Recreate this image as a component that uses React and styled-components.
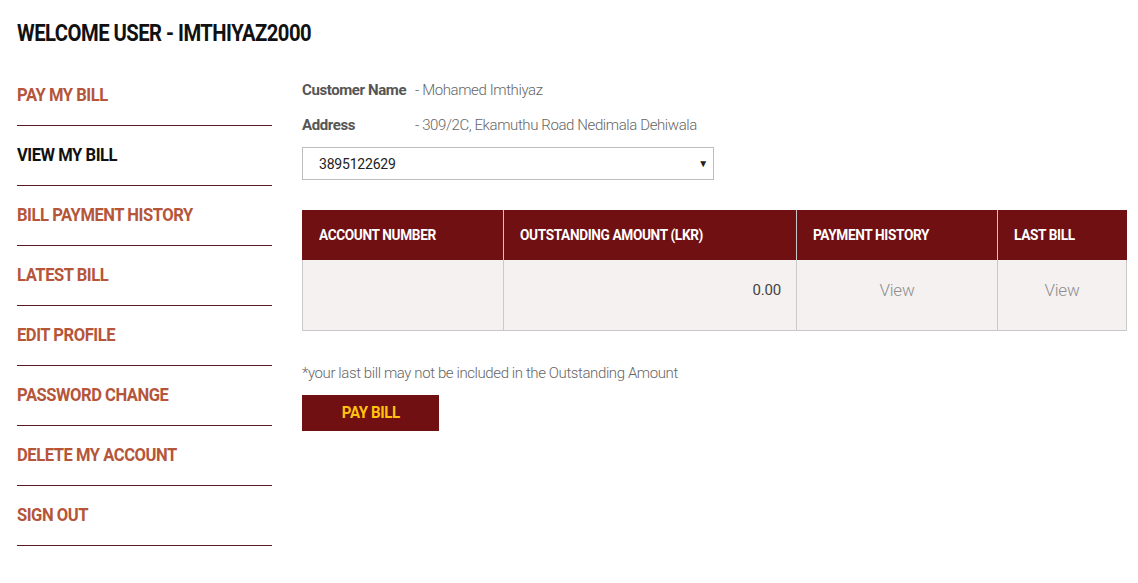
import React from 'react'
import styled, { createGlobalStyle } from 'styled-components'

const GlobalStyle = createGlobalStyle`
    body{
        margin:0;
        background:#fff;
        font-family:Roboto, "Liberation Sans", sans-serif;
    }
`;

const menu = [
    'pay my bill',
    'view my bill',
    'bill payment history',
    'latest bill',
    'edit profile',
    'password change',
    'delete my account',
    'sign out',
];

const App = () => {
    return (
        <Page>
            <GlobalStyle />
            <Title><Narrow scale={0.88}>welcome user - imthiyaz2000</Narrow></Title>
            <Body>
                <Side>
                    {menu.map((m) => (
                        <MenuItem key={m} $active={m === 'view my bill'}>
                            <Narrow scale={0.92}>{m}</Narrow>
                        </MenuItem>
                    ))}
                </Side>
                <Main>
                    <Info>
                        <Label>Customer Name</Label>
                        <Value>- Mohamed Imthiyaz</Value>
                    </Info>
                    <Info>
                        <Label>Address</Label>
                        <Value>- 309/2C, Ekamuthu Road Nedimala Dehiwala</Value>
                    </Info>
                    <Select>
                        <span>3895122629</span>
                        <Arrow>▼</Arrow>
                    </Select>
                    <Table>
                        <thead>
                            <tr>
                                <Th width={201}><Narrow scale={0.91}>account number</Narrow></Th>
                                <Th width={293}><Narrow scale={0.91}>outstanding amount (lkr)</Narrow></Th>
                                <Th width={201}><Narrow scale={0.91}>payment history</Narrow></Th>
                                <Th><Narrow scale={0.91}>last bill</Narrow></Th>
                            </tr>
                        </thead>
                        <tbody>
                            <tr>
                                <Td></Td>
                                <Td align="right">0.00</Td>
                                <Td align="center"><Link>View</Link></Td>
                                <Td align="center"><Link>View</Link></Td>
                            </tr>
                        </tbody>
                    </Table>
                    <Note>*your last bill may not be included in the Outstanding Amount</Note>
                    <PayButton><Narrow scale={0.94} origin="center">pay bill</Narrow></PayButton>
                </Main>
            </Body>
        </Page>
    )
}

// Roboto is wider than the condensed face in the picture, so squeeze the caps a bit
const Narrow = styled.span`
    display:inline-block;
    white-space:nowrap;
    transform:scaleX(${(p) => p.scale || 1});
    transform-origin:${(p) => p.origin || 'left'} center;
`;

const Page = styled.div`
    padding:22px 11px 0 17px;
    width:1110px;
`;

const Title = styled.h1`
    margin:0;
    height:32px;
    font-size:23px;
    line-height:1;
    font-weight:700;
    letter-spacing:-0.6px;
    text-transform:uppercase;
    color:#111;
`;

const Body = styled.div`
    display:flex;
    margin-top:12px;
`;

const Side = styled.div`
    width:255px;
    display:flex;
    flex-direction:column;
    flex-shrink:0;
`;

const MenuItem = styled.a`
    display:block;
    height:60px;
    padding-top:20px;
    box-sizing:border-box;
    line-height:1;
    border-bottom:1px solid #5a1c24;
    font-size:18px;
    font-weight:700;
    letter-spacing:-0.5px;
    text-transform:uppercase;
    color:${(p) => (p.$active ? '#111' : '#b5553a')};
    cursor:pointer;
`;

const Main = styled.div`
    flex:1;
    margin-left:30px;
    padding-top:6px;
`;

const Info = styled.div`
    display:flex;
    align-items:center;
    height:35px;
    font-size:15px;
`;

const Label = styled.div`
    width:113px;
    font-weight:700;
    letter-spacing:-0.4px;
    color:#555;
`;

const Value = styled.div`
    font-weight:300;
    letter-spacing:-0.4px;
    color:#666;
`;

const Select = styled.div`
    margin-top:5px;
    width:412px;
    height:33px;
    box-sizing:border-box;
    border:1px solid #bdbdbd;
    display:flex;
    align-items:center;
    justify-content:space-between;
    padding:0 5px 0 16px;
    font-size:14px;
    letter-spacing:-0.2px;
    color:#222;
`;

const Arrow = styled.span`
    font-size:10px;
    color:#222;
`;

const Table = styled.table`
    margin-top:30px;
    width:825px;
    border-collapse:collapse;
    table-layout:fixed;
`;

const Th = styled.th`
    box-sizing:border-box;
    width:${(p) => (p.width ? p.width + 'px' : 'auto')};
    height:50px;
    padding:0 0 0 16px;
    text-align:left;
    background:#701013;
    color:#fff;
    font-size:15px;
    font-weight:700;
    letter-spacing:-0.4px;
    text-transform:uppercase;
    border-left:1px solid #c9c9c9;
    &:first-child{
        border-left:1px solid #701013;
    }
`;

const Td = styled.td`
    box-sizing:border-box;
    height:70px;
    padding:0 15px 10px;
    text-align:${(p) => p.align || 'left'};
    background:#f5f1f0;
    border:1px solid #c9c9c9;
    border-top:none;
    font-size:15px;
    letter-spacing:-0.2px;
    color:#444;
`;

const Link = styled.a`
    font-size:17px;
    font-weight:300;
    color:#8e8e8e;
    cursor:pointer;
`;

const Note = styled.p`
    margin:33px 0 0;
    font-size:15px;
    font-weight:300;
    letter-spacing:-0.4px;
    color:#666;
`;

const PayButton = styled.button`
    display:block;
    margin-top:13px;
    width:137px;
    height:36px;
    border:none;
    background:#701013;
    color:#ffc20e;
    font-family:Roboto, sans-serif;
    font-size:16px;
    font-weight:700;
    letter-spacing:-0.4px;
    text-transform:uppercase;
    cursor:pointer;
`;

export default App
